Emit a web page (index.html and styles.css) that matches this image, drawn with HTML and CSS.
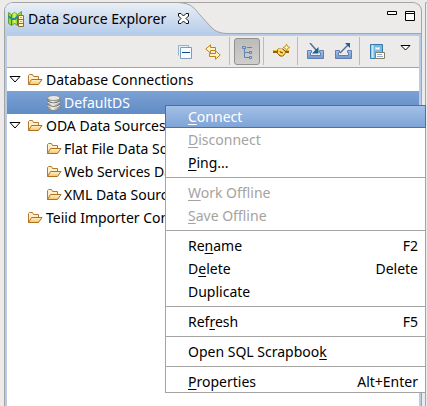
FILE: index.html
```html
<!DOCTYPE html>
<html lang="en">
<head>
<meta charset="utf-8">
<title>Data Source Explorer</title>
<link rel="stylesheet" href="styles.css">
</head>
<body>
<svg class="defs" width="0" height="0" aria-hidden="true">
  <defs>
    <linearGradient id="paper" x1="0" y1="0" x2="0" y2="1"><stop offset="0" stop-color="#fff3cf"/><stop offset="1" stop-color="#f3c468"/></linearGradient>
    <linearGradient id="metal" x1="0" y1="0" x2="1" y2="0"><stop offset="0" stop-color="#7c7c7a"/><stop offset=".4" stop-color="#f2f2ee"/><stop offset="1" stop-color="#858583"/></linearGradient>
    <linearGradient id="tabfill" x1="0" y1="0" x2="0" y2="1"><stop offset="0" stop-color="#e9eff6"/><stop offset="1" stop-color="#b6cce9"/></linearGradient>
    <linearGradient id="tray" x1="0" y1="0" x2="0" y2="1"><stop offset="0" stop-color="#a9c0e2"/><stop offset="1" stop-color="#7595c8"/></linearGradient>
    <symbol id="folder" viewBox="0 0 16 13">
      <path d="M1.500 11.500v-9l1-1h3l1 2h5v3" fill="#fdf0cd" stroke="#b8782a"/>
      <path d="M1.500 11.500l3-5h10.500l-3.500 5z" fill="url(#paper)" stroke="#b0701f"/>
    </symbol>
    <symbol id="open" viewBox="0 0 12 7"><path d="M1 .5h10L6 6z" fill="#fff" stroke="#000"/></symbol>
    <symbol id="tray-shape" viewBox="0 0 17 17">
      <path d="M.5 7.500h4v2h-1v3h10v-3h-1v-2h4v8H.5z" fill="url(#tray)" stroke="#5f80b6"/>
    </symbol>
  </defs>
</svg>
<main class="view">
  <header class="header">
    <div class="tab">
      <svg width="16" height="16" viewBox="0 0 16 16" aria-hidden="true">
        <path d="M.5 1.500l3 2 3-2 3 2 4-3v11l-4 3-3-2-3 2-3-2z" fill="#9edb31" stroke="#6a9f32"/>
        <path d="M3.500 4v10M9.500 4v10" stroke="#4d7d31"/><path d="M6.500 2v10" stroke="#d7f372" stroke-width="2"/>
        <path d="M0 5l4 3 3 0 3-3" fill="none" stroke="#258d99" stroke-width="2"/>
        <path d="M10.500 4.500h5v11h-5z" fill="#fff4c0" stroke="#8a7040"/><path d="M11 8.500h4M11 12.500h4" stroke="#8a7040"/><path d="M12 6.500h2M12 10.500h2" stroke="#c5ad69"/>
      </svg>
      <h1 class="title">Data Source Explorer</h1>
      <button class="plain" aria-label="Close">
        <svg width="11" height="11" viewBox="0 0 11 11"><path d="M.5.5h2.500l2.500 2.500L8 .5h2.500V3L8 5.500l2.500 2.500v2.500H8L5.500 8 3 10.500H.5V8L3 5.500.5 3z" fill="#fff" stroke="#111"/></svg>
      </button>
    </div>
    <svg class="curve" width="50" height="31" viewBox="0 0 50 31" aria-hidden="true">
      <path d="M0 0C15 0 17 5 23 12L34 24Q40 30.500 50 30.500V31H0z" fill="url(#tabfill)"/>
      <path d="M0 -.5C15 0 17 5 23 12L34 24Q40 30.500 50 30.500" fill="none" stroke="#a5a4a2"/>
    </svg>
    <div class="window-buttons">
      <button class="plain" aria-label="Minimize"><svg width="10" height="10" viewBox="0 0 10 10"><path d="M.5.5h9v3h-9z" fill="#fff" stroke="#000"/></svg></button>
      <button class="plain" aria-label="Maximize"><svg width="10" height="10" viewBox="0 0 10 10"><path d="M.5.5h9v9h-9zM0 2.500h10" fill="#fff" stroke="#000"/></svg></button>
    </div>
  </header>
  <div class="content">
    <div class="toolbar" role="toolbar">
      <button class="tool" aria-label="Collapse All"><svg width="14" height="14" viewBox="0 0 14 14"><path d="M.5 10.500V.5h10v2" fill="#eaf4fb" stroke="#8fb2ce"/><path d="M2.500 2.500h11v11h-11z" fill="#f6fcff" stroke="#809db8"/><path d="M4 7.500h8" stroke="#0a4a91"/></svg></button>
      <button class="tool" aria-label="Link with Editor"><svg width="16" height="16" viewBox="0 0 16 16"><path d="M.8 5L5.500.8v2.700h5v3h-5v2.700z" fill="#fff3bf" stroke="#bd8319"/><path d="M15.200 11L10.500 6.800v2.700h-6v3h6v2.700z" fill="#fff3bf" stroke="#bd8319"/></svg></button>
      <span class="rule"></span>
      <button class="tool pressed" aria-label="Show Categories" aria-pressed="true"><svg width="12" height="14" viewBox="0 0 12 14"><path d="M1.500 1.500h3v2h-3zM8.500 6.500h2v2h-2zM8.500 11.500h2v2h-2zM3.500 4v8.500h5M3.500 7.500h5M6 2.500h5" fill="none" stroke="#6281b5"/></svg></button>
      <span class="rule"></span>
      <button class="tool" aria-label="New Connection"><svg width="17" height="16" viewBox="0 0 17 16"><path d="M0 7.500h5M11 7.500h5" stroke="#94610b" stroke-width="3"/><path d="M0 6.500h5M11 6.500h5" stroke="#f3bd26"/><path d="M5 5h5l3 3-3 4H7L4 9z" fill="#e7a51b" stroke="#8b5a0c"/><path d="M5 6.500l3-1 3 3-2 2-4-2" fill="none" stroke="#ffdf62" stroke-width="2"/><path d="M7 8l3 1" stroke="#754709"/><path d="M13.500 0l1 2.500 2.500 1-2.500 1-1 2.500-1-2.500-2.500-1 2.500-1z" fill="#fff7ad" stroke="#c19634"/></svg></button>
      <span class="rule"></span>
      <button class="tool" aria-label="Import"><svg width="17" height="17" viewBox="0 0 17 17"><use href="#tray-shape"/><path d="M3 0l7 8" stroke="#536e9d" stroke-width="1.500"/><path d="M11.500 4v6.500H5z" fill="#176497"/></svg></button>
      <button class="tool" aria-label="Export"><svg width="17" height="17" viewBox="0 0 17 17"><use href="#tray-shape"/><path d="M5 10l8-8" stroke="#536e9d" stroke-width="1.500"/><path d="M10 0h5v5z" fill="#176497"/></svg></button>
      <span class="rule"></span>
      <button class="tool" aria-label="Open Scrapbook"><svg width="15" height="16" viewBox="0 0 15 16"><path d="M.5 .5h12v14H.5z" fill="#78b8dc" stroke="#347ba9"/><path d="M2.500 1v13" stroke="#c8e8f7" stroke-width="2"/><path d="M5.500 3.500h4v2h-4z" fill="#fff" stroke="#b7dded"/><path d="M5.500 8.500h9v6h-9z" fill="#fff" stroke="#847f68"/><path d="M7 10.500h5M7 12.500h6" stroke="#93adcd"/></svg></button>
      <button class="tool last" aria-label="View Menu"><svg width="11" height="16" viewBox="0 0 11 16"><path d="M1 1.500h9L5.500 6z" fill="#fff" stroke="#000"/></svg></button>
    </div>
    <ul class="tree" role="tree">
      <li role="treeitem" aria-expanded="true">
        <div class="row"><svg class="twist"><use href="#open"/></svg><svg class="icon"><use href="#folder"/></svg><span>Database Connections</span></div>
        <ul role="group">
          <li role="treeitem" aria-selected="true"><div class="row child selected"><svg class="icon database" viewBox="0 0 16 16"><path d="M1.500 3v10.500q6 4 12.500 0V3z" fill="url(#metal)" stroke="#858583"/><ellipse cx="7.750" cy="3" rx="6.250" ry="2.500" fill="#e6e8e4" stroke="#8d8d8b"/><path d="M1.500 6q6 4 12.500 0M1.500 9.500q6 4 12.500 0" fill="none" stroke="#6c6c6a"/><path d="M1.500 7q6 4 12.500 0M1.500 10.500q6 4 12.500 0" fill="none" stroke="#e9e9e3"/></svg><span>DefaultDS</span></div></li>
        </ul>
      </li>
      <li role="treeitem" aria-expanded="true">
        <div class="row"><svg class="twist"><use href="#open"/></svg><svg class="icon"><use href="#folder"/></svg><span>ODA Data Sources</span></div>
        <ul role="group">
          <li role="treeitem"><div class="row child"><svg class="icon"><use href="#folder"/></svg><span>Flat File Data Source</span></div></li>
          <li role="treeitem"><div class="row child"><svg class="icon"><use href="#folder"/></svg><span>Web Services Data Source</span></div></li>
          <li role="treeitem"><div class="row child"><svg class="icon"><use href="#folder"/></svg><span>XML Data Source</span></div></li>
        </ul>
      </li>
      <li role="treeitem"><div class="row leaf"><svg class="icon"><use href="#folder"/></svg><span>Teiid Importer Connections</span></div></li>
    </ul>
  </div>
</main>
<aside class="neighbor"></aside>
<div class="menu" role="menu">
  <button class="item active" role="menuitem"><span><u>C</u>onnect</span></button>
  <button class="item" role="menuitem" disabled><span><u>D</u>isconnect</span></button>
  <button class="item" role="menuitem"><span><u>P</u>ing...</span></button>
  <hr>
  <button class="item" role="menuitem" disabled><span><u>W</u>ork Offline</span></button>
  <button class="item" role="menuitem" disabled><span><u>S</u>ave Offline</span></button>
  <hr>
  <button class="item" role="menuitem"><span>Re<u>n</u>ame</span><span>F2</span></button>
  <button class="item" role="menuitem"><span>D<u>e</u>lete</span><span>Delete</span></button>
  <button class="item" role="menuitem"><span>Duplicate</span></button>
  <hr>
  <button class="item" role="menuitem"><span>Ref<u>r</u>esh</span><span>F5</span></button>
  <hr>
  <button class="item" role="menuitem"><span>Open SQL Scrapboo<u>k</u></span></button>
  <hr>
  <button class="item" role="menuitem"><span><u>P</u>roperties</span><span>Alt+Enter</span></button>
</div>
</body>
</html>
```
FILE: styles.css
```css
* { box-sizing: border-box; }
body {
  margin: 0;
  min-height: 100vh;
  padding: 2px 0 0 4px;
  display: flex;
  gap: 3px;
  overflow: hidden;
  background: #edebe9;
  color: #000;
  font: 14px/23px "Noto Sans", "Open Sans", sans-serif;
}
button { font: inherit; color: inherit; }
svg { display: block; flex: none; }
ul { list-style: none; margin: 0; padding: 0; }
.defs { position: absolute; }
.view {
  flex: 1;
  min-width: 0;
  display: flex;
  flex-direction: column;
  border: 1px solid #a5a4a2;
  border-bottom: 0;
  border-radius: 9px 9px 0 0;
  overflow: hidden;
}
.neighbor {
  width: 2px;
  border-left: 1px solid #a5a4a2;
  border-top: 1px solid #a5a4a2;
  border-radius: 2px 0 0 0;
}
.header { display: flex; height: 31px; }
.tab {
  display: flex;
  align-items: center;
  gap: 4px;
  padding: 0 0 0 3px;
  background: linear-gradient(#e9eff6, #b6cce9);
}
.title { margin: 0; font-size: 14px; font-weight: 400; white-space: nowrap; }
.plain { padding: 0; border: 0; background: none; }
.tab .plain { margin-left: 8px; position: relative; z-index: 1; }
.curve { margin-left: -12px; }
.window-buttons {
  flex: 1;
  display: flex;
  justify-content: flex-end;
  align-items: flex-start;
  gap: 8px;
  padding: 8px 6px 0 0;
  border-bottom: 1px solid #a5a4a2;
}
.content {
  flex: 1;
  padding: 2px 2px 0 1px;
  background: #b6cce9;
  display: flex;
  flex-direction: column;
}
.content { padding-left: 2px; }
.toolbar {
  height: 32px;
  display: flex;
  justify-content: flex-end;
  background: #edebe9;
  border-bottom: 1px solid #a5a4a2;
}
.tool {
  width: 28px;
  padding: 0;
  border: 0;
  background: none;
  display: flex;
  justify-content: center;
  align-items: center;
}
.rule { width: 1px; margin: 1px 3px 2px 2px; background: #bdbbb8; }
.pressed {
  margin: 2px 1px;
  width: 26px;
  border: 1px solid #92908d;
  border-radius: 3px;
  background: linear-gradient(#bebcba, #d0cecb);
}
.tree { flex: 1; background: #fff; }
.row { height: 23px; display: flex; align-items: center; padding-left: 2px; white-space: nowrap; }
.twist { width: 12px; height: 7px; margin-right: 6px; }
.icon { width: 16px; height: 13px; margin-right: 3px; }
.leaf { padding-left: 20px; }
.child { padding-left: 39px; }
.child .icon { margin-right: 2px; }
.row .database { height: 16px; }
.selected { color: #fff; background: linear-gradient(#7ca2d5, #608bc4); }
.menu {
  position: absolute;
  top: 105px;
  left: 165px;
  right: 1px;
  background: #fff;
  border: 1px solid #a5a4a2;
  border-top: 0;
}
.item {
  width: 100%;
  height: 23px;
  padding: 0 7px 0 22px;
  border: 0;
  background: none;
  display: flex;
  justify-content: space-between;
  align-items: center;
  text-align: left;
}
.item:last-child { height: 22px; }
.item:disabled { color: #a5a3a0; }
.item u { text-underline-offset: 2px; text-decoration-skip-ink: none; }
.active {
  color: #fff;
  width: calc(100% + 2px);
  margin: 0 -1px;
  border: 1px solid #4c70a4;
  background: linear-gradient(#a2c0e8, #7fa4d6);
}
.menu hr { height: 1px; margin: 3px 0; border: 0; background: #a5a4a2; }
```
